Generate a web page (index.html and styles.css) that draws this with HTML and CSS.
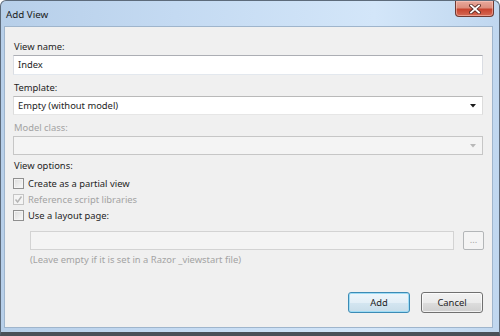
FILE: index.html
```html
<!DOCTYPE html>
<html>
<head>
<meta charset="utf-8">
<link rel="stylesheet" href="styles.css">
</head>
<body>
<div class="window">
  <div class="titlebar">
    <span class="title">Add View</span>
    <div class="close">
      <svg width="12" height="10" viewBox="0 0 12 10">
        <path d="M2 1.5 L10 8.5 M10 1.5 L2 8.5" stroke="#5a2a24" stroke-width="3.6" stroke-linecap="square"/>
        <path d="M2 1.5 L10 8.5 M10 1.5 L2 8.5" stroke="#ffffff" stroke-width="1.8" stroke-linecap="square"/>
      </svg>
    </div>
  </div>
  <div class="client">
    <div class="label">View name:</div>
    <div class="textbox">Index</div>

    <div class="label gap6">Template:</div>
    <div class="combo">
      <span>Empty (without model)</span>
      <svg class="arrow" width="6" height="4" viewBox="0 0 6 4"><path d="M0 0 H6 L3 3.5 Z" fill="#1a1a1a"/></svg>
    </div>

    <div class="label gap6 disabled">Model class:</div>
    <div class="combo combo-disabled">
      <span></span>
      <svg class="arrow" width="6" height="4" viewBox="0 0 6 4"><path d="M0 0 H6 L3 3.5 Z" fill="#b8b8b8"/></svg>
    </div>

    <div class="label gap4">View options:</div>
    <div class="checks">
      <div class="check-row"><span class="checkbox"></span><span>Create as a partial view</span></div>
      <div class="check-row disabled"><span class="checkbox checkbox-disabled">
        <svg width="9" height="9" viewBox="0 0 9 9"><path d="M1.5 4.5 L3.6 7 L7.5 1.5" fill="none" stroke="#b5b5b5" stroke-width="1.5"/></svg>
      </span><span>Reference script libraries</span></div>
      <div class="check-row"><span class="checkbox"></span><span>Use a layout page:</span></div>
    </div>

    <div class="layout-row">
      <div class="textbox textbox-disabled"></div>
      <div class="browse">...</div>
    </div>
    <div class="hint">(Leave empty if it is set in a Razor _viewstart file)</div>

    <div class="footer">
      <div class="button button-default">Add</div>
      <div class="button">Cancel</div>
    </div>
  </div>
</div>
</body>
</html>
```
FILE: styles.css
```css
html, body {
  margin: 0;
  padding: 0;
  width: 500px;
  height: 336px;
  overflow: hidden;
  background: #ffffff;
}

.window {
  box-sizing: border-box;
  width: 500px;
  height: 336px;
  border: 1px solid #5d6b7b;
  border-bottom: 4px solid #4a5058;
  border-radius: 6px 6px 0 0;
  background: linear-gradient(to right, #b7cfe9 0%, #c4daf2 35%, #d3e6f9 75%, #c0d7ef 100%);
  display: flex;
  flex-direction: column;
  font-family: "Noto Sans", "Open Sans", sans-serif;
  font-size: 9.4px;
  color: #1e1e1e;
}

.titlebar {
  height: 25px;
  display: flex;
  justify-content: space-between;
  align-items: flex-start;
  padding-left: 5px;
  padding-right: 5px;
}

.title {
  align-self: center;
  font-size: 9.8px;
  color: #1b1b1b;
  margin-top: 1px;
}

.close {
  width: 39px;
  height: 16px;
  box-sizing: border-box;
  border: 1px solid #6e3a33;
  border-top: none;
  border-radius: 0 0 4px 4px;
  background: linear-gradient(to bottom, #e9a99c 0%, #dc8e7e 45%, #c8442f 55%, #d56a55 100%);
  box-shadow: inset 0 0 0 1px rgba(255, 210, 200, 0.5);
  display: flex;
  align-items: center;
  justify-content: center;
}

.client {
  flex: 1;
  margin: 0 6px 4px 3px;
  border: 1px solid #9fb5cc;
  background: #f0f0f0;
  padding: 13px 9px 14px 8px;
  display: flex;
  flex-direction: column;
}

.label {
  height: 14px;
  line-height: 14px;
  padding-left: 1px;
  margin-bottom: 1px;
}

.gap6 { margin-top: 6px; }
.gap4 { margin-top: 4px; }

.disabled { color: #a3a3a3; }

.textbox {
  box-sizing: border-box;
  height: 20px;
  background: #ffffff;
  border: 1px solid;
  border-color: #acaeb4 #dadde3 #e3e8ee #dadde3;
  padding-left: 4px;
  line-height: 18px;
}

.combo {
  box-sizing: border-box;
  height: 19px;
  background: #ffffff;
  border: 1px solid;
  border-color: #b9b9b9 #dcdcdc #e6e6e6 #dcdcdc;
  padding: 0 6px 0 4px;
  display: flex;
  align-items: center;
  justify-content: space-between;
}

.combo-disabled {
  background: #f4f4f4;
  border-color: #c6c6c6;
}

.checks {
  margin-top: 1px;
  display: flex;
  flex-direction: column;
}

.check-row {
  height: 16px;
  display: flex;
  align-items: center;
  gap: 4px;
}

.checkbox {
  box-sizing: border-box;
  width: 11px;
  height: 11px;
  border: 1px solid #8f8f8f;
  background: linear-gradient(135deg, #dcdcdc, #fafafa);
  box-shadow: inset 0 0 0 1px #f4f4f4;
  display: flex;
  align-items: center;
  justify-content: center;
}

.checkbox-disabled {
  border-color: #c5c5c5;
  background: #f4f4f4;
  box-shadow: none;
}

.layout-row {
  margin-top: 8px;
  padding-left: 17px;
  display: flex;
  gap: 9px;
}

.layout-row .textbox {
  flex: 1;
  height: 19px;
}

.textbox-disabled {
  background: #f4f4f4;
  border-color: #d3d3d3;
}

.browse {
  box-sizing: border-box;
  width: 21px;
  height: 19px;
  margin-right: -1px;
  border: 1px solid #b3b6b8;
  border-radius: 2px;
  background: #f4f4f4;
  color: #a5a5a5;
  text-align: center;
  line-height: 15px;
}

.hint {
  margin-top: 3px;
  padding-left: 17px;
  line-height: 14px;
  color: #a3a3a3;
}

.footer {
  margin-top: auto;
  display: flex;
  justify-content: flex-end;
  gap: 11px;
}

.button {
  box-sizing: border-box;
  width: 62px;
  height: 21px;
  border: 1px solid #707070;
  border-radius: 3px;
  background: linear-gradient(to bottom, #f2f2f2 0%, #ebebeb 50%, #dddddd 51%, #cfcfcf 100%);
  box-shadow: inset 0 0 0 1px rgba(255, 255, 255, 0.7);
  text-align: center;
  line-height: 19px;
}

.button-default {
  border-color: #3c8bb5;
  background: linear-gradient(to bottom, #eef6fb 0%, #e3eff7 50%, #d4e6f1 51%, #c8dde9 100%);
  box-shadow: inset 0 0 0 1px #9fdcf5;
}
```
